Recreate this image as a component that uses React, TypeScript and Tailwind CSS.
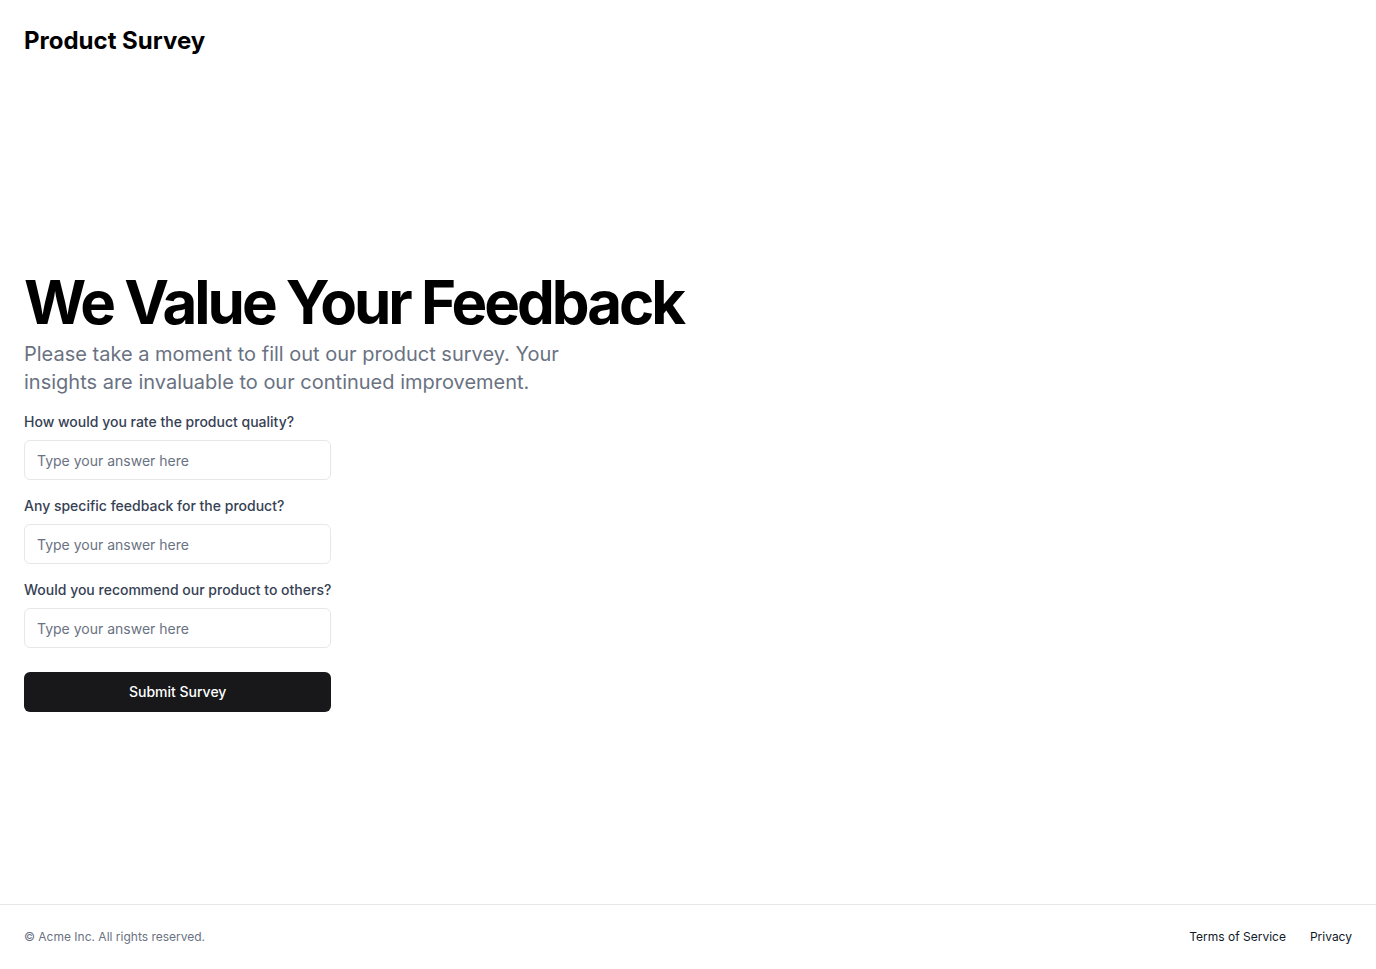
const questions = [
  "How would you rate the product quality?",
  "Any specific feedback for the product?",
  "Would you recommend our product to others?",
];

function SurveyField({ label, id }: { label: string; id: string }) {
  return (
    <div className="flex flex-col gap-2">
      <label
        htmlFor={id}
        className="whitespace-nowrap text-sm font-medium leading-5 text-gray-700"
      >
        {label}
      </label>
      <input
        id={id}
        type="text"
        placeholder="Type your answer here"
        className="h-10 w-full rounded-md border border-gray-200 bg-white px-3 text-sm text-gray-900 placeholder:text-gray-500 outline-none"
      />
    </div>
  );
}

export default function App() {
  return (
    <div
      className="flex min-h-screen flex-col bg-white text-black"
      style={{ fontFamily: "Inter, 'Noto Sans', sans-serif" }}
    >
      <header className="flex h-20 items-center px-6 pt-0.5">
        <h1 className="text-2xl font-bold">Product Survey</h1>
      </header>

      <main className="flex flex-1 flex-col justify-center px-6">
        <div className="flex flex-col gap-2">
          <h2 className="text-6xl leading-none font-bold tracking-tighter">
            We Value Your Feedback
          </h2>
          <p className="max-w-[600px] text-xl leading-7 text-gray-500">
            Please take a moment to fill out our product survey. Your insights
            are invaluable to our continued improvement.
          </p>
        </div>

        <form className="mt-4 flex w-max flex-col gap-4">
          {questions.map((q, i) => (
            <SurveyField key={q} label={q} id={`q-${i}`} />
          ))}
          <button
            type="button"
            className="mt-2 h-10 w-full rounded-md bg-zinc-900 text-sm font-medium text-white"
          >
            Submit Survey
          </button>
        </form>
      </main>

      <footer className="flex items-center justify-between border-t border-gray-200 px-6 py-6">
        <p className="text-xs leading-4 text-gray-500">
          © Acme Inc. All rights reserved.
        </p>
        <nav className="flex gap-6 text-xs leading-4 text-gray-900">
          <a href="#">Terms of Service</a>
          <a href="#">Privacy</a>
        </nav>
      </footer>
    </div>
  );
}
